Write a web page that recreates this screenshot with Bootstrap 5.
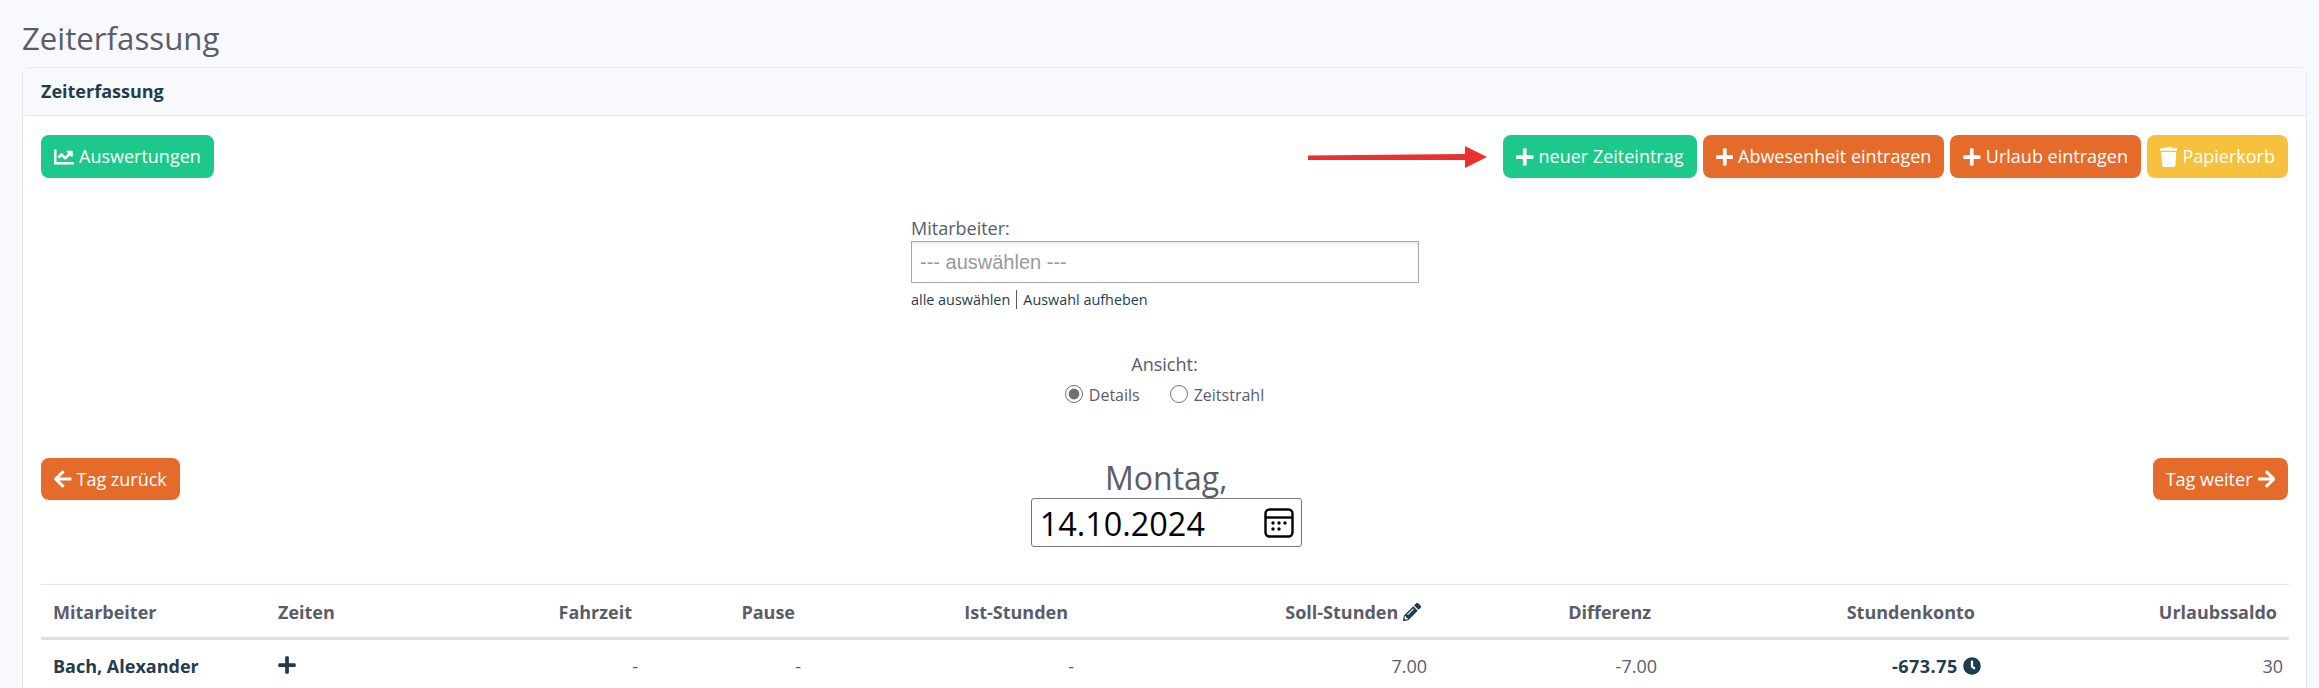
<!DOCTYPE html>
<html lang="de">
<head>
  <meta charset="UTF-8" />
  <meta name="viewport" content="width=device-width, initial-scale=1.0" />
  <title>Zeiterfassung</title>
  <link href="https://cdn.jsdelivr.net/npm/bootstrap@5.3.0/dist/css/bootstrap.min.css" rel="stylesheet">
  <style>
    html, body { height: 100%; overflow: hidden; }
    body {
      background: #f8f9fc;
      color: #5a5c69;
      font-family: "Open Sans", "Noto Sans", sans-serif;
      font-size: 18px;
      padding: 18px 12px 0 22px;
    }
    .page-title { font-size: 31.2px; font-weight: 400; line-height: 40px; margin: 0 0 9px; color: #5a5c69; }
    .main-card { border-color: #e3e6f0; border-radius: 8px; }
    .main-card .card-header {
      background: #f8f9fc;
      border-bottom-color: #e3e6f0;
      color: #1f3d50;
      font-weight: 700;
      font-size: 18px;
      height: 48px;
      line-height: 47px;
      padding: 0 18px;
    }
    .main-card .card-body { padding: 19px 18px 60px; }

    .act-btn {
      height: 43px;
      padding: 0 13px;
      border: 0;
      border-radius: 8px;
      font-size: 18px;
      color: #fff;
      display: inline-flex;
      align-items: center;
      gap: 5px;
      white-space: nowrap;
    }
    .act-btn svg { height: 20px; fill: #fff; flex: none; }
    .act-green, .act-green:hover { background: #1cc98a; color: #fff; }
    .act-orange, .act-orange:hover { background: #e56b2b; color: #fff; }
    .act-yellow, .act-yellow:hover { background: #f6c23e; color: #fff; }
    .nav-btn { height: 42px; }
    .hint-arrow { width: 179px; height: 22px; margin-right: 10px; }
    .btn-row { gap: 6px; }

    .staff-box { width: 509px; margin: 38px auto 0; padding-left: 1px; }
    .staff-label { line-height: 24px; margin-bottom: 1px; display: block; }
    .staff-select {
      height: 42px;
      border: 1px solid #aaa;
      box-shadow: inset 0 4px 5px -3px rgba(0,0,0,.12);
      font-family: "Liberation Sans", Arial, sans-serif;
      font-size: 20px;
      line-height: 40px;
      color: #999;
      padding-left: 8px;
    }
    .staff-links { font-size: 14.4px; margin-top: 7px; line-height: 20px; color: #1f3d50; }
    .staff-links a { color: #1f3d50; text-decoration: none; }
    .staff-links .sep { border-left: 1px solid #5a5c69; margin: 0 6px 0 6px; }

    .view-box { text-align: center; margin-top: 42px; }
    .view-label { line-height: 24px; }
    .view-opts { margin-top: 8px; font-size: 16px; line-height: 22px; gap: 30px; }
    .view-opts label { display: inline-flex; align-items: center; gap: 6px; }
    .view-opts input { width: 18px; height: 18px; margin: 0 0 3px; accent-color: #6f6f6f; }

    .day-row { margin-top: 52px; }
    .day-mid { text-align: center; }
    .day-name { font-size: 32px; line-height: 40px; color: #5a5c69; }
    .date-field {
      width: 271px;
      height: 49px;
      border: 1px solid #767676;
      border-radius: 3px;
      color: #000;
      font-size: 32.4px;
      padding: 0 7px 0 8px;
    }
    .date-field span { padding-top: 2px; }
    .date-field svg { width: 30px; height: 30px; }

    .time-table { table-layout: fixed; width: 100%; margin: 37px 0 0; border-top: 1px solid #e3e6f0; }
    .time-table th {
      color: #5a5c69;
      font-weight: 700;
      font-size: 18px;
      padding: 15px 12px 13px;
      line-height: 24px;
      border-bottom: 3px solid #dddfeb;
      background: transparent;
    }
    .time-table td {
      color: #5a5c69;
      font-size: 18px;
      padding: 14px 6px 15px 12px;
      line-height: 24px;
      background: transparent;
    }
    .time-table td.who { color: #1f3d50; font-weight: 700; }
    .time-table td.bal { color: #1f3d50; font-weight: 700; letter-spacing: .5px; }
    .time-table svg { fill: #1f3d50; vertical-align: -2px; }
    .plus-ico { width: 18px; height: 20px; vertical-align: -3px; }
    .pen-ico, .clock-ico { width: 18px; height: 18px; }
    .c-name { width: 225px; } .c-zeit { width: 274px; } .c-fahrt { width: 104px; }
    .c-pause { width: 163px; } .c-ist { width: 273px; } .c-soll { width: 353px; }
    .c-diff { width: 230px; } .c-konto { width: 324px; } .c-url { width: 302px; }
  </style>
</head>
<body>
  <h1 class="page-title">Zeiterfassung</h1>

  <div class="card main-card">
    <div class="card-header">Zeiterfassung</div>
    <div class="card-body">

      <!-- Toolbar -->
      <div class="d-flex justify-content-between align-items-center">
        <a href="#" class="btn act-btn act-green">
          <svg viewBox="0 0 512 512"><path d="M496 384H64V80c0-8.84-7.16-16-16-16H16C7.16 64 0 71.16 0 80v336c0 17.67 14.33 32 32 32h464c8.84 0 16-7.16 16-16v-32c0-8.84-7.16-16-16-16zM464 96H345.94c-21.38 0-32.09 25.85-16.97 40.97l32.4 32.4L288 242.75l-73.37-73.37c-12.5-12.5-32.76-12.5-45.25 0l-68.69 68.69c-6.25 6.25-6.25 16.38 0 22.63l22.62 22.62c6.25 6.25 16.38 6.25 22.63 0L192 237.25l73.37 73.37c12.5 12.5 32.76 12.5 45.25 0l96-96 32.4 32.4c15.12 15.12 40.97 4.41 40.97-16.97V112c.01-8.84-7.15-16-16-16z"/></svg>
          Auswertungen
        </a>
        <div class="d-flex align-items-center btn-row">
          <svg class="hint-arrow" viewBox="0 0 179 22"><path fill="#ec2f2f" d="M0 9.5 157 8V0l22 11-22 11v-8L0 14z"/></svg>
          <a href="#" class="btn act-btn act-green">
            <svg viewBox="0 0 448 512"><path d="M416 208H272V64c0-17.67-14.33-32-32-32h-32c-17.67 0-32 14.33-32 32v144H32c-17.67 0-32 14.33-32 32v32c0 17.67 14.33 32 32 32h144v144c0 17.67 14.33 32 32 32h32c17.67 0 32-14.33 32-32V304h144c17.67 0 32-14.33 32-32v-32c0-17.67-14.33-32-32-32z"/></svg>
            neuer Zeiteintrag
          </a>
          <a href="#" class="btn act-btn act-orange">
            <svg viewBox="0 0 448 512"><path d="M416 208H272V64c0-17.67-14.33-32-32-32h-32c-17.67 0-32 14.33-32 32v144H32c-17.67 0-32 14.33-32 32v32c0 17.67 14.33 32 32 32h144v144c0 17.67 14.33 32 32 32h32c17.67 0 32-14.33 32-32V304h144c17.67 0 32-14.33 32-32v-32c0-17.67-14.33-32-32-32z"/></svg>
            Abwesenheit eintragen
          </a>
          <a href="#" class="btn act-btn act-orange">
            <svg viewBox="0 0 448 512"><path d="M416 208H272V64c0-17.67-14.33-32-32-32h-32c-17.67 0-32 14.33-32 32v144H32c-17.67 0-32 14.33-32 32v32c0 17.67 14.33 32 32 32h144v144c0 17.67 14.33 32 32 32h32c17.67 0 32-14.33 32-32V304h144c17.67 0 32-14.33 32-32v-32c0-17.67-14.33-32-32-32z"/></svg>
            Urlaub eintragen
          </a>
          <a href="#" class="btn act-btn act-yellow">
            <svg viewBox="0 0 448 512"><path d="M432 32H312l-9.4-18.7A24 24 0 0 0 281.1 0H166.8a23.72 23.72 0 0 0-21.4 13.3L136 32H16A16 16 0 0 0 0 48v32a16 16 0 0 0 16 16h416a16 16 0 0 0 16-16V48a16 16 0 0 0-16-16zM53.2 467a48 48 0 0 0 47.9 45h245.8a48 48 0 0 0 47.9-45L416 128H32z"/></svg>
            Papierkorb
          </a>
        </div>
      </div>

      <!-- Mitarbeiter -->
      <div class="staff-box">
        <label class="staff-label">Mitarbeiter:</label>
        <div class="staff-select">--- auswählen ---</div>
        <div class="staff-links"><a href="#">alle auswählen</a><span class="sep"></span><a href="#">Auswahl aufheben</a></div>
      </div>

      <!-- Ansicht -->
      <div class="view-box">
        <div class="view-label">Ansicht:</div>
        <div class="view-opts d-flex justify-content-center">
          <label><input type="radio" name="ansicht" checked> Details</label>
          <label><input type="radio" name="ansicht"> Zeitstrahl</label>
        </div>
      </div>

      <!-- Tag -->
      <div class="day-row d-flex justify-content-between align-items-start">
        <a href="#" class="btn act-btn act-orange nav-btn">
          <svg viewBox="0 0 448 512"><path d="M257.5 445.1l-22.2 22.2c-9.4 9.4-24.6 9.4-33.9 0L7 273c-9.4-9.4-9.4-24.6 0-33.9L201.4 44.7c9.4-9.4 24.6-9.4 33.9 0l22.2 22.2c9.5 9.5 9.3 25-.4 34.3L136.6 216H424c13.3 0 24 10.7 24 24v32c0 13.3-10.7 24-24 24H136.6l120.5 114.8c9.8 9.3 10 24.8.4 34.3z"/></svg>
          Tag zurück
        </a>
        <div class="day-mid">
          <div class="day-name">Montag,</div>
          <div class="date-field d-flex justify-content-between align-items-center">
            <span>14.10.2024</span>
            <svg viewBox="0 0 30 30" fill="none"><rect x="1.5" y="1.5" width="27" height="27" rx="4" stroke="#000" stroke-width="2.4"/><path d="M1.5 9.5h27" stroke="#000" stroke-width="2.4"/><g fill="#000"><circle cx="9" cy="15" r="1.7"/><circle cx="15" cy="15" r="1.7"/><circle cx="21" cy="15" r="1.7"/><circle cx="9" cy="21" r="1.7"/><circle cx="15" cy="21" r="1.7"/></g></svg>
          </div>
        </div>
        <a href="#" class="btn act-btn act-orange nav-btn">
          Tag weiter
          <svg viewBox="0 0 448 512"><path d="M190.5 66.9l22.2-22.2c9.4-9.4 24.6-9.4 33.9 0L441 239c9.4 9.4 9.4 24.6 0 33.9L246.6 467.3c-9.4 9.4-24.6 9.4-33.9 0l-22.2-22.2c-9.5-9.5-9.3-25 .4-34.3L311.4 296H24c-13.3 0-24-10.7-24-24v-32c0-13.3 10.7-24 24-24h287.4L190.9 101.2c-9.8-9.3-10-24.8-.4-34.3z"/></svg>
        </a>
      </div>

      <!-- Tabelle -->
      <table class="table table-borderless time-table">
        <colgroup>
          <col class="c-name"><col class="c-zeit"><col class="c-fahrt"><col class="c-pause"><col class="c-ist">
          <col class="c-soll"><col class="c-diff"><col class="c-konto"><col class="c-url">
        </colgroup>
        <thead>
          <tr>
            <th>Mitarbeiter</th>
            <th>Zeiten</th>
            <th class="text-end">Fahrzeit</th>
            <th class="text-end">Pause</th>
            <th class="text-end">Ist-Stunden</th>
            <th class="text-end">Soll-Stunden
              <svg class="pen-ico" viewBox="0 0 512 512"><path d="M497.9 142.1l-46.1 46.1c-4.7 4.7-12.3 4.7-17 0l-111-111c-4.7-4.7-4.7-12.3 0-17l46.1-46.1c18.7-18.7 49.1-18.7 67.9 0l60.1 60.1c18.8 18.7 18.8 49.1 0 67.9zM284.2 99.8L21.6 362.4.4 483.9c-2.9 16.4 11.4 30.6 27.8 27.8l121.5-21.3 262.6-262.6c4.7-4.7 4.7-12.3 0-17l-111-111c-4.8-4.7-12.4-4.7-17.1 0zM124.1 339.9c-5.5-5.5-5.5-14.3 0-19.8l154-154c5.5-5.5 14.3-5.5 19.8 0s5.5 14.3 0 19.8l-154 154c-5.5 5.5-14.3 5.5-19.8 0zM88 424h48v36.3l-64.5 11.3-31.1-31.1L51.7 376H88v48z"/></svg>
            </th>
            <th class="text-end">Differenz</th>
            <th class="text-end">Stundenkonto</th>
            <th class="text-end">Urlaubssaldo</th>
          </tr>
        </thead>
        <tbody>
          <tr>
            <td class="who">Bach, Alexander</td>
            <td><svg class="plus-ico" viewBox="0 0 448 512"><path d="M416 208H272V64c0-17.67-14.33-32-32-32h-32c-17.67 0-32 14.33-32 32v144H32c-17.67 0-32 14.33-32 32v32c0 17.67 14.33 32 32 32h144v144c0 17.67 14.33 32 32 32h32c17.67 0 32-14.33 32-32V304h144c17.67 0 32-14.33 32-32v-32c0-17.67-14.33-32-32-32z"/></svg></td>
            <td class="text-end">-</td>
            <td class="text-end">-</td>
            <td class="text-end">-</td>
            <td class="text-end">7.00</td>
            <td class="text-end">-7.00</td>
            <td class="text-end bal">-673.75
              <svg class="clock-ico" viewBox="0 0 512 512"><path d="M256,8C119,8,8,119,8,256S119,504,256,504,504,393,504,256,393,8,256,8Zm92.49,313h0l-20,25a16,16,0,0,1-22.49,2.5h0l-67-49.72a40,40,0,0,1-15-31.23V112a16,16,0,0,1,16-16h32a16,16,0,0,1,16,16V256l58,42.5A16,16,0,0,1,348.49,321Z"/></svg>
            </td>
            <td class="text-end">30</td>
          </tr>
        </tbody>
      </table>
    </div>
  </div>

  <script src="https://cdn.jsdelivr.net/npm/bootstrap@5.3.0/dist/js/bootstrap.bundle.min.js"></script>
</body>
</html>
